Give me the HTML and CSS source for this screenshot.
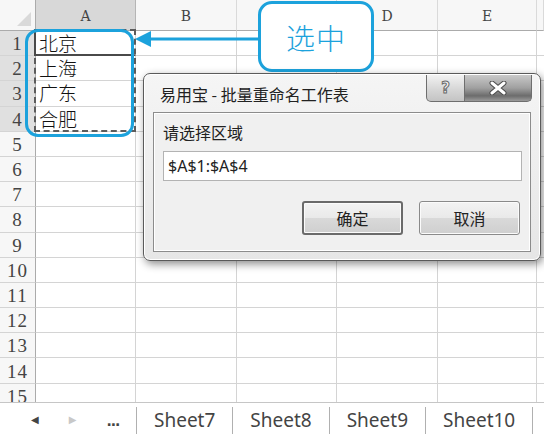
FILE: index.html
```html
<!DOCTYPE html>
<html lang="zh">
<head>
<meta charset="utf-8">
<title>易用宝 - 批量重命名工作表</title>
<link rel="stylesheet" href="styles.css">
</head>
<body>
<div class="app">
  <div class="sheet">
    <div class="grid">
      <div class="corner"><span class="tri"></span></div>
      <div class="colhead sel">A</div>
      <div class="colhead">B</div>
      <div class="colhead"></div>
      <div class="colhead">D</div>
      <div class="colhead">E</div>
      <div class="colhead rest"></div>

      <div class="rowhead sel">1</div><div class="cell txt">北京</div><div class="cell"></div><div class="cell"></div><div class="cell"></div><div class="cell"></div><div class="cell rest"></div>
      <div class="rowhead sel">2</div><div class="cell txt">上海</div><div class="cell"></div><div class="cell"></div><div class="cell"></div><div class="cell"></div><div class="cell rest"></div>
      <div class="rowhead sel">3</div><div class="cell txt">广东</div><div class="cell"></div><div class="cell"></div><div class="cell"></div><div class="cell"></div><div class="cell rest"></div>
      <div class="rowhead sel">4</div><div class="cell txt">合肥</div><div class="cell"></div><div class="cell"></div><div class="cell"></div><div class="cell"></div><div class="cell rest"></div>
      <div class="rowhead">5</div><div class="cell"></div><div class="cell"></div><div class="cell"></div><div class="cell"></div><div class="cell"></div><div class="cell rest"></div>
      <div class="rowhead">6</div><div class="cell"></div><div class="cell"></div><div class="cell"></div><div class="cell"></div><div class="cell"></div><div class="cell rest"></div>
      <div class="rowhead">7</div><div class="cell"></div><div class="cell"></div><div class="cell"></div><div class="cell"></div><div class="cell"></div><div class="cell rest"></div>
      <div class="rowhead">8</div><div class="cell"></div><div class="cell"></div><div class="cell"></div><div class="cell"></div><div class="cell"></div><div class="cell rest"></div>
      <div class="rowhead">9</div><div class="cell"></div><div class="cell"></div><div class="cell"></div><div class="cell"></div><div class="cell"></div><div class="cell rest"></div>
      <div class="rowhead">10</div><div class="cell"></div><div class="cell"></div><div class="cell"></div><div class="cell"></div><div class="cell"></div><div class="cell rest"></div>
      <div class="rowhead">11</div><div class="cell"></div><div class="cell"></div><div class="cell"></div><div class="cell"></div><div class="cell"></div><div class="cell rest"></div>
      <div class="rowhead">12</div><div class="cell"></div><div class="cell"></div><div class="cell"></div><div class="cell"></div><div class="cell"></div><div class="cell rest"></div>
      <div class="rowhead">13</div><div class="cell"></div><div class="cell"></div><div class="cell"></div><div class="cell"></div><div class="cell"></div><div class="cell rest"></div>
      <div class="rowhead">14</div><div class="cell"></div><div class="cell"></div><div class="cell"></div><div class="cell"></div><div class="cell"></div><div class="cell rest"></div>
      <div class="rowhead">15</div><div class="cell"></div><div class="cell"></div><div class="cell"></div><div class="cell"></div><div class="cell"></div><div class="cell rest"></div>
    </div>

    <div class="marquee"></div>
    <div class="active-cell"></div>
    <div class="highlight"></div>

    <svg class="arrow" width="130" height="20" viewBox="0 0 130 20">
      <line x1="14" y1="10" x2="125" y2="10" stroke="#1ca2dc" stroke-width="3"/>
      <polygon points="0,10 16,2 16,18" fill="#1ca2dc"/>
    </svg>
    <div class="callout">选中</div>

    <div class="dialog">
      <div class="titlebar">
        <span class="title">易用宝 - 批量重命名工作表</span>
        <div class="winbtns">
          <span class="wb help">?</span>
          <span class="wb close">
            <svg width="18" height="14" viewBox="0 0 18 14">
              <path d="M3 2 L15 12 M15 2 L3 12" stroke="#4a4a4a" stroke-width="5" stroke-linecap="round"/>
              <path d="M3 2 L15 12 M15 2 L3 12" stroke="#ffffff" stroke-width="3" stroke-linecap="round"/>
            </svg>
          </span>
        </div>
      </div>
      <div class="panel">
        <div class="label">请选择区域</div>
        <div class="input">$A$1:$A$4</div>
        <div class="actions">
          <button class="btn default">确定</button>
          <button class="btn">取消</button>
        </div>
      </div>
    </div>
  </div>

  <div class="tabbar">
    <div class="nav">
      <span class="navbtn left">&#9664;</span>
      <span class="navbtn right">&#9654;</span>
      <span class="dots">...</span>
    </div>
    <div class="tab">Sheet7</div>
    <div class="tab">Sheet8</div>
    <div class="tab">Sheet9</div>
    <div class="tab">Sheet10</div>
    <div class="tab endsep"></div>
  </div>
</div>
</body>
</html>
```

FILE: styles.css
```css
html, body {
  margin: 0;
  padding: 0;
  background: #ffffff;
}
body {
  width: 544px;
  height: 434px;
  overflow: hidden;
  font-family: "Noto Sans CJK SC", "Noto Sans", sans-serif;
}
.app {
  display: flex;
  flex-direction: column;
  width: 544px;
  height: 434px;
}
.sheet {
  position: relative;
  height: 402px;
  overflow: hidden;
  flex: none;
}
.grid {
  display: grid;
  grid-template-columns: 36px 100px 101px 100px 101px 99px 7px;
  grid-template-rows: 31px;
  grid-auto-rows: 25.2px;
}
.grid > div {
  box-sizing: border-box;
  border-right: 1px solid #d4d4d4;
  border-bottom: 1px solid #d4d4d4;
}
.grid > .rest { border-right: none; }
.corner {
  background: #f7f7f7;
  border-right: 1px solid #ababab !important;
  border-bottom: 1px solid #ababab !important;
  position: relative;
}
.tri {
  position: absolute;
  right: 4px;
  bottom: 4px;
  width: 0;
  height: 0;
  border-left: 14px solid transparent;
  border-bottom: 14px solid #d9d9d9;
}
.colhead {
  background: #f7f7f7;
  border-bottom: 1px solid #ababab !important;
  border-right: 1px solid #dadada !important;
  font-family: "DejaVu Serif", "Liberation Serif", serif;
  font-size: 14px;
  color: #444;
  display: flex;
  align-items: center;
  justify-content: center;
  padding-top: 2px;
}
.colhead.sel { background: #d8d8d8; border-right-color: #b5b5b5 !important; }
.rowhead {
  background: #f7f7f7;
  border-right: 1px solid #ababab !important;
  font-family: "Liberation Serif", "DejaVu Serif", serif;
  font-size: 19px;
  color: #444;
  display: flex;
  align-items: center;
  justify-content: center;
  padding-top: 2px;
  letter-spacing: 1px;
}
.rowhead.sel { background: #e0e0e0; }
.cell { background: #ffffff; }
.cell.txt {
  font-size: 19px;
  line-height: 24px;
  padding-left: 3px;
  color: #111;
  font-weight: 300;
}

.marquee {
  position: absolute;
  left: 34px;
  top: 29px;
  width: 102px;
  height: 103px;
  box-sizing: border-box;
  border: 2px dashed #5c5c5c;
}
.active-cell {
  position: absolute;
  left: 34px;
  top: 29px;
  width: 102px;
  height: 27px;
  box-sizing: border-box;
  border: 2px solid #4a4a4a;
  border-top-color: transparent;
  border-right-color: transparent;
}
.highlight {
  position: absolute;
  left: 25px;
  top: 29px;
  width: 109px;
  height: 108px;
  box-sizing: border-box;
  border: 3px solid #1ca2dc;
  border-radius: 13px;
}
.arrow {
  position: absolute;
  left: 135px;
  top: 29px;
}
.callout {
  position: absolute;
  left: 258px;
  top: 1px;
  width: 116px;
  height: 71px;
  box-sizing: border-box;
  border: 3px solid #1ca2dc;
  border-radius: 14px;
  background: #ffffff;
  color: #1ca2dc;
  font-size: 29px;
  font-weight: 300;
  display: flex;
  align-items: center;
  justify-content: center;
  letter-spacing: 1px;
}

.dialog {
  position: absolute;
  left: 143px;
  top: 73px;
  width: 398px;
  height: 188px;
  box-sizing: border-box;
  border: 1px solid #5a5a5a;
  border-radius: 7px;
  background: linear-gradient(#f5f5f5, #e6e6e6);
  box-shadow: 0 0 0 1px #ffffff inset, 2px 3px 9px rgba(0,0,0,0.45);
  display: flex;
  flex-direction: column;
}
.titlebar {
  height: 38px;
  display: flex;
  align-items: flex-start;
  flex: none;
}
.title {
  font-size: 16px;
  color: #222;
  padding: 8px 0 0 16px;
}
.winbtns {
  margin-left: auto;
  margin-right: 8px;
  margin-top: 1px;
  display: flex;
}
.wb {
  box-sizing: border-box;
  height: 27px;
  display: flex;
  align-items: center;
  justify-content: center;
  border: 1px solid #6e6e6e;
  border-top: none;
}
.help {
  width: 39px;
  border-bottom-left-radius: 5px;
  background: linear-gradient(#f2f2f2, #d4d4d4 60%, #c4c4c4);
  font-family: "DejaVu Sans", sans-serif;
  font-weight: bold;
  font-size: 15px;
  color: #f4f4f4;
  -webkit-text-stroke: 1px #6a6a6a;
}
.close {
  width: 67px;
  border-left: none;
  border-bottom-right-radius: 5px;
  background: linear-gradient(#c9c9c9, #a0a0a0 50%, #6c6c6c 80%, #9a9a9a);
}
.panel {
  flex: 1;
  margin: 0 9px 8px 9px;
  border: 1px solid #8c8c8c;
  box-shadow: 0 0 0 1px #ffffff inset;
  background: #f0f0f0;
  padding: 8px 8px 0 9px;
  display: flex;
  flex-direction: column;
}
.label {
  font-size: 16px;
  line-height: 22px;
  color: #222;
}
.input {
  margin-top: 8px;
  height: 30px;
  box-sizing: border-box;
  border: 1px solid #b3b3b3;
  background: #ffffff;
  font-family: "Noto Sans", sans-serif;
  font-size: 16px;
  line-height: 28px;
  padding-left: 4px;
  color: #222;
}
.actions {
  margin-top: 20px;
  display: flex;
  justify-content: flex-end;
  gap: 16px;
  padding-right: 2px;
}
.btn {
  width: 101px;
  height: 34px;
  box-sizing: border-box;
  border: 1px solid #8a8a8a;
  border-radius: 3px;
  background: linear-gradient(#f3f3f3, #e9e9e9 50%, #d9d9d9 51%, #cfcfcf);
  box-shadow: 0 0 0 1px #fbfbfb inset;
  font-family: "Noto Sans CJK SC", sans-serif;
  font-size: 16px;
  color: #222;
  padding: 0;
}
.btn.default {
  border: 2px solid #6a6a6a;
}

.tabbar {
  flex: 1;
  display: flex;
  border-top: 1px solid #c6c6c6;
  background: #ffffff;
  box-sizing: border-box;
}
.nav {
  width: 136px;
  display: flex;
  align-items: center;
  font-size: 12px;
  color: #555;
}
.navbtn {
  font-family: "DejaVu Sans", sans-serif;
  font-size: 10px;
}
.navbtn.left { margin-left: 31px; color: #444; }
.navbtn.right { margin-left: 30px; color: #c8c8c8; }
.dots {
  margin-left: 30px;
  font-family: "DejaVu Sans", sans-serif;
  font-size: 14px;
  font-weight: bold;
  color: #444;
  letter-spacing: -1px;
  padding-top: 2px;
}
.tab {
  margin-top: 4px;
  border-left: 1px solid #b0b0b0;
  padding: 0 17px;
  display: flex;
  align-items: center;
  font-family: "Noto Sans", sans-serif;
  font-size: 19px;
  color: #444;
  padding-bottom: 3px;
}
.tab.endsep { padding: 0; }
```
